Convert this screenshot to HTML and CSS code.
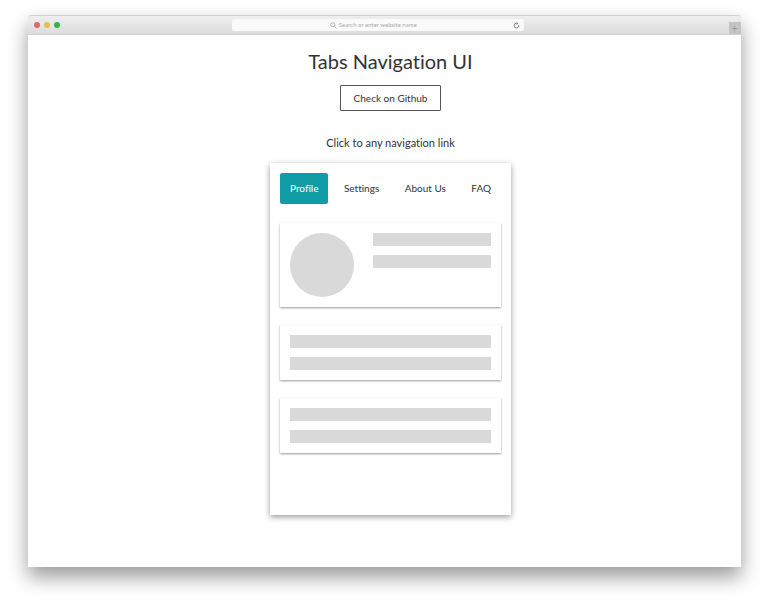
FILE: index.html
```html
<!DOCTYPE html>
<html lang="en">

<head>
    <meta charset="UTF-8">
    <meta name="viewport" content="width=device-width, initial-scale=1.0">
    <title>Tabs Navigation UI</title>
    <link rel="stylesheet" href="styles.css">
</head>

<body>
    <div class="browser">
        <header class="toolbar">
            <div class="dots">
                <span class="dot red"></span>
                <span class="dot yellow"></span>
                <span class="dot green"></span>
            </div>
            <form class="address">
                <label class="search" for="address">
                    <svg viewBox="0 0 8 8" width="7" height="7" aria-hidden="true">
                        <circle cx="3.2" cy="3.2" r="2.4" />
                        <path d="M5 5l2.4 2.4" />
                    </svg>
                </label>
                <input type="text" id="address" placeholder="Search or enter website name" aria-label="Address">
                <button type="button" class="reload" aria-label="Reload">
                    <svg viewBox="0 0 8 8" width="7" height="7" aria-hidden="true">
                        <path d="M6.6 3.4a2.7 2.7 0 1 1-2.4-2L5 1.6M3.8 0l1.6 1.6L3.8 3" />
                    </svg>
                </button>
            </form>
            <button type="button" class="new-tab" aria-label="New tab">
                <svg viewBox="0 0 8 8" width="7" height="7" aria-hidden="true">
                    <path d="M4 1v6M1 4h6" />
                </svg>
            </button>
        </header>

        <main>
            <h1>Tabs Navigation UI</h1>
            <a class="github" href="#">Check on Github</a>
            <p class="hint">Click to any navigation link</p>

            <section class="panel">
                <nav class="tabs">
                    <a class="tab active" href="#profile">Profile</a>
                    <a class="tab" href="#settings">Settings</a>
                    <a class="tab" href="#about">About Us</a>
                    <a class="tab" href="#faq">FAQ</a>
                </nav>

                <div class="cards" id="profile">
                    <div class="card">
                        <div class="avatar"></div>
                        <div class="lines">
                            <div class="line"></div>
                            <div class="line"></div>
                        </div>
                    </div>
                    <div class="card">
                        <div class="lines">
                            <div class="line"></div>
                            <div class="line"></div>
                        </div>
                    </div>
                    <div class="card">
                        <div class="lines">
                            <div class="line"></div>
                            <div class="line"></div>
                        </div>
                    </div>
                </div>
            </section>
        </main>
    </div>
</body>

</html>
```

FILE: styles.css
```css
* {
    box-sizing: border-box;
}

body {
    font-family: Lato, "Liberation Sans", sans-serif;
    font-size: 10px;
    font-variant-ligatures: none;
    color: #333;
    background-color: #fff;
    margin: 0;
    min-height: 100vh;
    padding: 15px 27px 38px 28px;
    display: flex;
}

/* Browser window */
.browser {
    flex: 1;
    display: flex;
    flex-direction: column;
    background-color: #fff;
    border-radius: 3px 3px 0 0;
    box-shadow: 0 10px 20px rgba(0, 0, 0, 0.4);
}

.toolbar {
    display: grid;
    grid-template-columns: 28% 42% 30%;
    align-items: center;
    height: 20px;
    background: linear-gradient(#efefef, #dcdcdc);
    border-top: 1px solid #d2d2d2;
    border-bottom: 1px solid #d0d0d0;
    border-radius: 3px 3px 0 0;
}

.dots {
    display: flex;
    gap: 4px;
    padding-left: 6px;
}

.dot {
    width: 6px;
    height: 6px;
    border-radius: 50%;
}

.red {
    background-color: #e2695f;
}

.yellow {
    background-color: #e6bf4b;
}

.green {
    background-color: #2fb446;
}

.address {
    display: flex;
    align-items: center;
    justify-content: center;
    height: 12px;
    margin: 0 3px 0 4px;
    padding: 0 4px;
    background-color: #fafafa;
    border-radius: 2px;
}

.search {
    display: flex;
    margin-left: auto;
}

.address input {
    width: 82px;
    padding: 0 0 0 2px;
    border: none;
    outline: none;
    background: none;
    font-family: inherit;
    font-size: 6px;
    line-height: 8px;
}

.address input::placeholder {
    color: #aaa;
}

svg {
    display: block;
    fill: none;
    stroke: #aaa;
    stroke-width: 1;
}

button {
    padding: 0;
    border: none;
    background: none;
    cursor: pointer;
}

.reload {
    margin-left: auto;
}

.reload svg {
    stroke: #777;
}

.new-tab {
    display: flex;
    align-items: center;
    justify-content: center;
    justify-self: end;
    align-self: end;
    width: 12px;
    height: 12px;
    background-color: #c4c4c4;
}

.new-tab svg {
    stroke: #999;
}

/* Page content */
main {
    display: flex;
    flex-direction: column;
    align-items: center;
    padding: 12px 0 40px 12px;
}

h1 {
    margin: 0;
    font-size: 20px;
    font-weight: 400;
    line-height: 28px;
}

a {
    color: inherit;
    text-decoration: none;
}

.github {
    margin-top: 10px;
    padding: 4px 13px;
    border: 1px solid #555;
    border-radius: 1px;
    line-height: 16px;
}

.hint {
    margin: 24px 0 0;
    font-size: 11px;
    line-height: 16px;
}

.panel {
    width: 241px;
    min-height: 352px;
    margin-top: 12px;
    padding: 10px;
    background-color: #fff;
    box-shadow: 0 2px 6px rgba(0, 0, 0, 0.4);
}

.tabs {
    display: flex;
    justify-content: space-between;
}

.tab {
    padding: 8px 10px;
    border-radius: 2px;
    line-height: 15px;
}

.tab.active {
    background-color: #109ca4;
    color: #fff;
}

.cards {
    display: flex;
    flex-direction: column;
    gap: 18px;
    margin-top: 19px;
}

.card {
    display: flex;
    gap: 19px;
    padding: 10px;
    background-color: #fff;
    box-shadow: 0 1px 2px rgba(0, 0, 0, 0.4);
}

.avatar {
    width: 64px;
    height: 64px;
    border-radius: 50%;
    background-color: #d9d9d9;
}

.lines {
    flex: 1;
    display: flex;
    flex-direction: column;
    gap: 9px;
}

.line {
    height: 13px;
    background-color: #d9d9d9;
}
```
